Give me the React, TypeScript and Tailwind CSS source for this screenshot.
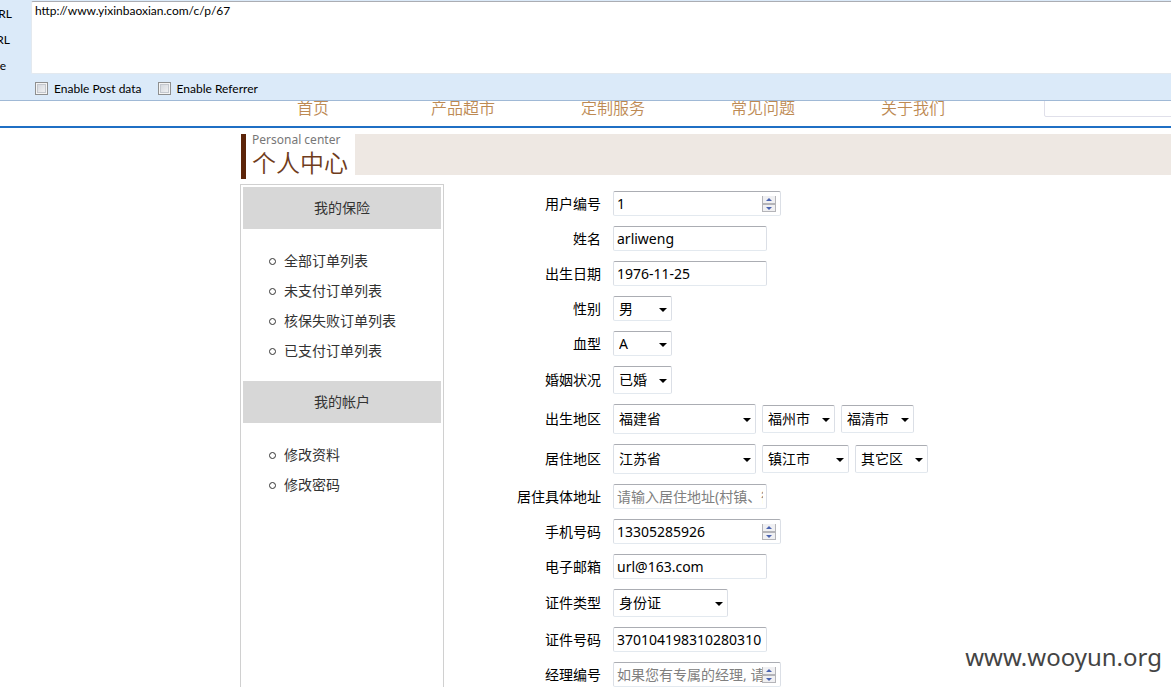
import React from 'react';

const fieldBox =
  "rounded-[2px] border border-t-[#abadb3] border-x-[#dbdfe6] border-b-[#e3e9ef] bg-white text-sm text-black outline-none font-['Noto_Sans','Noto_Sans_CJK_SC',sans-serif]";

function Row({ label, id, children }: { label: string; id: string; children: React.ReactNode }) {
  return (
    <div className="flex items-center gap-3">
      <label htmlFor={id} className="w-[100px] shrink-0 text-right text-sm leading-5">
        {label}
      </label>
      <div className="flex items-center gap-[6px]">{children}</div>
    </div>
  );
}

function TextField({ label, id, value, placeholder, type = 'text' }: { label: string; id: string; value?: string; placeholder?: string; type?: string }) {
  return (
    <Row label={label} id={id}>
      <input
        id={id}
        type={type}
        defaultValue={value}
        placeholder={placeholder}
        className={`${fieldBox} h-[25px] w-[154px] px-[3px] placeholder:text-[#808080]`}
      />
    </Row>
  );
}

function NumberField({ label, id, value, placeholder }: { label: string; id: string; value?: string; placeholder?: string }) {
  const step = 'flex h-2 w-[14px] items-center justify-center border-x border-b border-[#b4b4b8] bg-[#f0f0f2]';
  return (
    <Row label={label} id={id}>
      <div className="relative flex">
        <input
          id={id}
          type="number"
          defaultValue={value}
          placeholder={placeholder}
          className={`${fieldBox} h-[25px] w-[168px] pr-[18px] pl-[3px] [appearance:textfield] placeholder:text-[#808080] [&::-webkit-inner-spin-button]:appearance-none`}
        />
        <div className="absolute top-[5px] right-[5px] flex flex-col">
          <button type="button" aria-label="增加" className={step}>
            <svg width="6" height="3" viewBox="0 0 6 3"><path d="M0 3L3 0L6 3Z" fill="#4a63b0" /></svg>
          </button>
          <button type="button" aria-label="减少" className={`${step} border-t`}>
            <svg width="6" height="3" viewBox="0 0 6 3"><path d="M0 0L3 3L6 0Z" fill="#4a63b0" /></svg>
          </button>
        </div>
      </div>
    </Row>
  );
}

function Select({ id, label, value, size }: { id: string; label?: string; value: string; size: string }) {
  return (
    <div className="relative flex">
      <select id={id} aria-label={label} className={`${fieldBox} ${size} appearance-none pl-[5px]`}>
        <option>{value}</option>
      </select>
      <svg width="8" height="4" viewBox="0 0 8 4" className="pointer-events-none absolute top-1/2 right-[5px] -mt-px">
        <path d="M0 0H8L4 4Z" fill="#000" />
      </svg>
    </div>
  );
}

function MenuGroup({ title, items }: { title: string; items: string[] }) {
  return (
    <section>
      <h2 className="bg-[#d7d7d7] text-center text-sm leading-[42px]">{title}</h2>
      <ul className="pt-[17px] pb-[15px] pl-[26px]">
        {items.map((item) => (
          <li key={item} className="flex items-center gap-2">
            <span className="size-[7px] rounded-full border border-[#333]" />
            <a href="#" className="text-sm leading-[30px]">{item}</a>
          </li>
        ))}
      </ul>
    </section>
  );
}

function ToolCheck({ id, label }: { id: string; label: string }) {
  return (
    <div className="flex items-center gap-[6px]">
      <input
        id={id}
        type="checkbox"
        className="size-[13px] appearance-none border border-[#8e8f8f] bg-linear-to-br from-[#cfd3da] to-[#f6f6f6] shadow-[inset_0_0_0_1px_#f4f4f4,inset_0_0_0_2px_#c4c8ce]"
      />
      <label htmlFor={id}>{label}</label>
    </div>
  );
}

export default function App() {
  return (
    <div className="relative flex h-screen flex-col overflow-hidden bg-white font-['Noto_Sans','Noto_Sans_CJK_SC',sans-serif] text-black">
      <div className="shrink-0 border-b border-[#a0b9d6] bg-[#dbeaf9] pt-px font-['Lato','Noto_Sans',sans-serif] text-xs">
        <div className="flex">
          <div className="flex h-[73px] w-[31px] shrink-0 flex-col leading-[26px]">
            <span className="flex w-3 justify-end">RL</span>
            <span className="flex w-[10px] justify-end">RL</span>
            <span className="flex w-[6px] justify-end">e</span>
          </div>
          <textarea
            aria-label="URL"
            defaultValue="http://www.yixinbaoxian.com/c/p/67"
            className="h-[73px] min-w-0 flex-1 resize-none rounded-l-[2px] border border-r-0 border-t-[#abadb3] border-l-[#e3e9ef] border-b-[#e3e9ef] bg-white px-[3px] pt-px leading-4 outline-none"
          />
        </div>
        <div className="flex h-[26px] items-center gap-4 pt-[3px] pl-[35px]">
          <ToolCheck id="post" label="Enable Post data" />
          <ToolCheck id="referrer" label="Enable Referrer" />
        </div>
      </div>

      <header className="flex h-[27px] shrink-0 items-end overflow-hidden border-b-2 border-[#1f6fc4] pl-[238px]">
        <nav className="flex shrink-0">
          {['首页', '产品超市', '定制服务', '常见问题', '关于我们'].map((name) => (
            <a key={name} href="#" className="w-[150px] text-center text-base leading-9 font-[350] text-[#bd8a53]">{name}</a>
          ))}
        </nav>
        <input aria-label="搜索" className="mb-[9px] ml-14 h-7 w-40 shrink-0 rounded-[2px] border border-[#e0e0ea]" />
      </header>

      <div className="flex shrink-0 items-start pt-[6px] pl-[241px]">
        <div className="flex h-[45px] w-[114px] shrink-0 flex-col border-l-[5px] border-[#5c2409] bg-white pl-[6px]">
          <span className="text-xs leading-3 text-[#777]">Personal center</span>
          <h1 className="text-2xl leading-[34px] font-[350] text-[#6f3c1c]">个人中心</h1>
        </div>
        <div className="h-[41px] flex-1 bg-[#eee8e3]" />
      </div>

      <main className="flex flex-1 pt-[5px] pl-[240px]">
        <aside className="w-[204px] shrink-0 border border-b-0 border-[#d0d0d0] p-[2px] text-[#333]">
          <MenuGroup title="我的保险" items={['全部订单列表', '未支付订单列表', '核保失败订单列表', '已支付订单列表']} />
          <MenuGroup title="我的帐户" items={['修改资料', '修改密码']} />
        </aside>
        <form className="flex h-0 flex-col gap-[10px] pt-[7px] pl-[57px]">
          <NumberField label="用户编号" id="uid" value="1" />
          <TextField label="姓名" id="name" value="arliweng" />
          <TextField label="出生日期" id="birthday" value="1976-11-25" />
          <Row label="性别" id="sex"><Select id="sex" value="男" size="h-[25px] w-[59px]" /></Row>
          <Row label="血型" id="blood"><Select id="blood" value="A" size="h-[25px] w-[59px]" /></Row>
          <Row label="婚姻状况" id="marriage"><Select id="marriage" value="已婚" size="h-7 w-[59px]" /></Row>
          <Row label="出生地区" id="birth-province">
            <Select id="birth-province" value="福建省" size="h-[30px] w-[143px]" />
            <Select id="birth-city" label="出生城市" value="福州市" size="h-7 w-[73px]" />
            <Select id="birth-area" label="出生区县" value="福清市" size="h-7 w-[73px]" />
          </Row>
          <Row label="居住地区" id="live-province">
            <Select id="live-province" value="江苏省" size="h-[30px] w-[143px]" />
            <Select id="live-city" label="居住城市" value="镇江市" size="h-7 w-[87px]" />
            <Select id="live-area" label="居住区县" value="其它区" size="h-7 w-[73px]" />
          </Row>
          <TextField label="居住具体地址" id="address" placeholder="请输入居住地址(村镇、街道)" />
          <NumberField label="手机号码" id="phone" value="13305285926" />
          <TextField label="电子邮箱" id="email" type="email" value="url@163.com" />
          <Row label="证件类型" id="card-type"><Select id="card-type" value="身份证" size="h-7 w-[115px]" /></Row>
          <TextField label="证件号码" id="card" value="370104198310280310" />
          <NumberField label="经理编号" id="manager" placeholder="如果您有专属的经理, 请填写" />
        </form>
      </main>

      <div className="pointer-events-none absolute right-[9px] bottom-[14px] font-['Noto_Sans',sans-serif] text-2xl leading-8 text-[#444]">www.wooyun.org</div>
    </div>
  );
}
